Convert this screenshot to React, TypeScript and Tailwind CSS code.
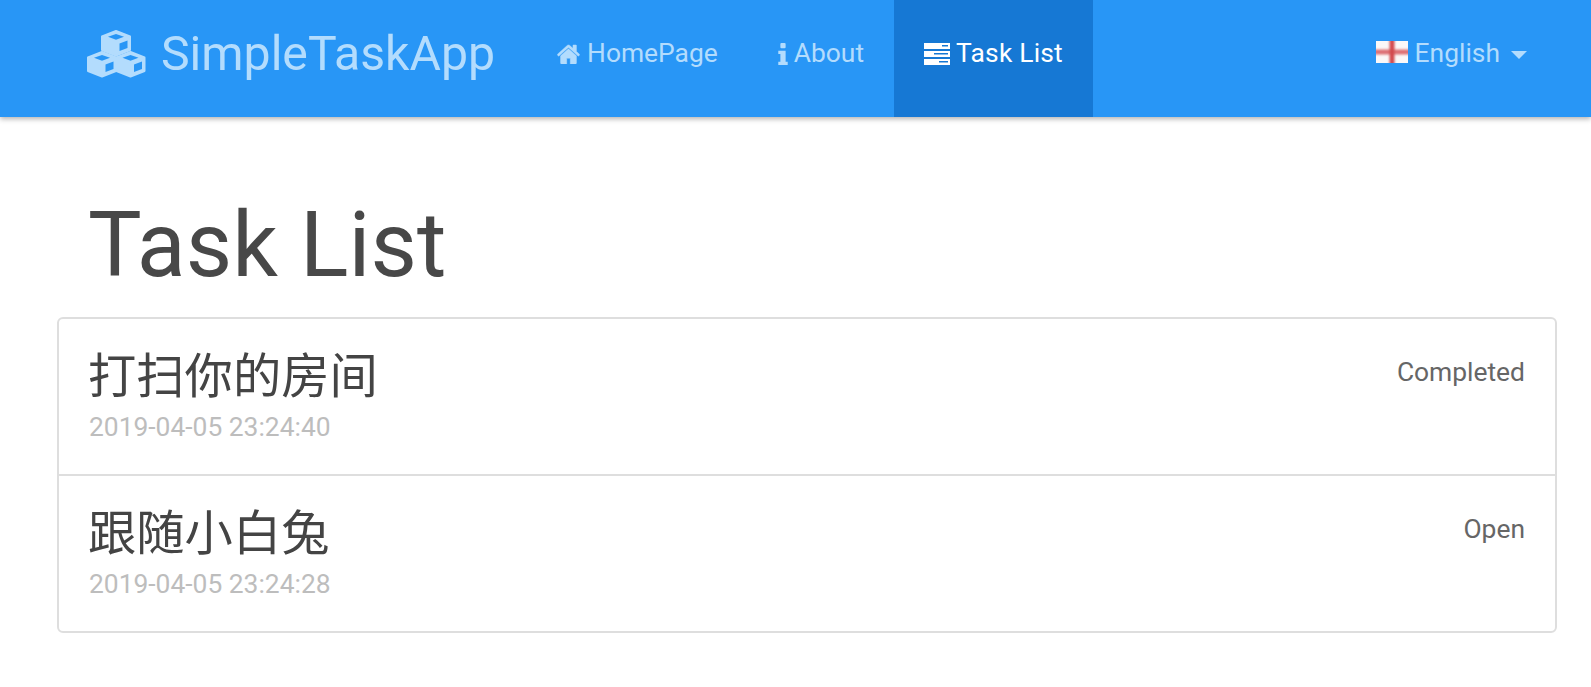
import React from 'react';

const Cube = ({ x, y }: { x: number; y: number }) => (
  <g transform={`translate(${x} ${y})`}>
    <path d="M15 1L29 6.500V20L15 25.500L1 20V6.500z" fill="#b3dcfd" stroke="#b3dcfd" strokeWidth="2" strokeLinejoin="round" />
    <path d="M15 4L23 6.800L15 9.700L7 6.800z" fill="#2896f6" />
    <path d="M18.500 13.500L26.500 10.500V18L18.500 21z" fill="#2896f6" />
  </g>
);

const CubesIcon = () => (
  <svg className="w-[59px] h-[48px] mr-[15px]" viewBox="0 0 59 48">
    <Cube x={14} y={0} />
    <Cube x={0} y={21} />
    <Cube x={28.500} y={21} />
  </svg>
);

const HomeIcon = () => (
  <svg className="w-[23px] h-[20px] mr-[7px]" viewBox="64 192 1664 1344" preserveAspectRatio="none" fill="currentColor" stroke="currentColor" strokeWidth="30">
    <path d="M1472 992v480q0 26-19 45t-45 19h-384v-384h-256v384h-384q-26 0-45-19t-19-45v-480q0-1 .5-3t.5-3l575-474 575 474q1 2 1 6zm223-69l-62 74q-8 9-21 11h-3q-13 0-21-7l-692-577-692 577q-12 8-24 7-13-2-21-11l-62-74q-8-10-7-23.500t11-21.500l719-599q32-26 76-26t76 26l244 204v-195q0-14 9-23t23-9h192q14 0 23 9t9 23v408l219 182q10 8 11 21.500t-7 23.500z" />
  </svg>
);

const InfoIcon = () => (
  <svg className="w-[10px] h-[22px] mr-[6px]" viewBox="0 0 9 21" fill="currentColor">
    <rect x="2" y="0" width="5" height="5" rx="1" />
    <path d="M0 7.500h7v10.500h2v3H0v-3h2v-7.500H0z" />
  </svg>
);

const TasksIcon = () => (
  <svg className="w-[26px] h-[22px] mr-[6px]" viewBox="0 0 26 22" fill="currentColor">
    <path d="M0 0h26v6H0zM18 2h6v1.500h-6zM0 8h26v6H0zM10 10h14v1.500H10zM0 16h26v6H0zM15 18h9v1.500h-9z" fillRule="evenodd" />
  </svg>
);

const FlagIcon = () => (
  <svg className="w-8 h-[22px] mr-[7px] mb-[3px]" viewBox="0 0 32 22">
    <defs>
      <filter id="flag-blur" x="0" y="0" width="100%" height="100%">
        <feGaussianBlur stdDeviation="1.300" />
      </filter>
    </defs>
    <rect width="32" height="22" fill="#fbf8f8" />
    <g filter="url(#flag-blur)">
      <rect x="-3" y="8.500" width="38" height="5" fill="#dd7074" />
      <rect x="13.500" y="-3" width="5" height="28" fill="#d24a4e" />
    </g>
  </svg>
);

const NavLink = ({ icon, label, active }: { icon: React.ReactNode; label: string; active?: boolean }) => (
  <a className={`flex items-center h-full px-[30px] pb-[10px] text-[26.4px] ${active ? 'bg-[#1678d4] text-white tracking-[0.2px]' : 'text-[#b3dcfd]'}`}>
    {icon}
    <span>{label}</span>
  </a>
);

const TaskRow = ({ title, date, status, last }: { title: string; date: string; status: string; last?: boolean }) => (
  <div className={`flex justify-between px-[30px] pt-[27px] ${last ? 'h-[155px]' : 'h-[157px] border-b-2 border-[#dedede]'}`}>
    <div>
      <h4 className="-ml-[1px] text-[48.3px] leading-[62px] text-[#444444]">{title}</h4>
      <div className="text-[26.4px] leading-[36px] mt-[1px] text-[#bdbdbd]">{date}</div>
    </div>
    <span className="text-[26.4px] leading-[36px] mt-[8px] text-[#666666]">{status}</span>
  </div>
);

const App: React.FC = () => {
  return (
    <div className="min-h-screen bg-white" style={{ fontFamily: 'Roboto, "Noto Sans CJK SC", sans-serif' }}>
      <nav className="flex items-stretch h-[117px] pl-[87px] pr-[64px] bg-[#2896f6] shadow-[0_2px_5px_rgba(0,0,0,0.3)]">
        <div className="flex items-center pb-[9px] text-[#b3dcfd]">
          <CubesIcon />
          <span className="text-[48.2px]">SimpleTaskApp</span>
        </div>
        <div className="flex items-center h-full ml-[32px]">
          <NavLink icon={<HomeIcon />} label="HomePage" />
          <NavLink icon={<InfoIcon />} label="About" />
          <NavLink icon={<TasksIcon />} label="Task List" active />
        </div>
        <div className="flex items-center ml-auto pb-[10px] text-[26.4px] text-[#b3dcfd]">
          <FlagIcon />
          <span>English</span>
          <span className="ml-[11px] mt-[3px] border-x-[8px] border-x-transparent border-t-[8px] border-t-[#b3dcfd]" />
        </div>
      </nav>
      <main className="px-[57px] pt-[76px]">
        <h1 className="pl-[31px] text-[90px] leading-[105px] mb-[19px] text-[#484848]">Task List</h1>
        <div className="w-[1500px] border-2 border-[#dedede] rounded-[6px]">
          <TaskRow title="打扫你的房间" date="2019-04-05 23:24:40" status="Completed" />
          <TaskRow title="跟随小白兔" date="2019-04-05 23:24:28" status="Open" last />
        </div>
      </main>
    </div>
  );
};

export default App;
